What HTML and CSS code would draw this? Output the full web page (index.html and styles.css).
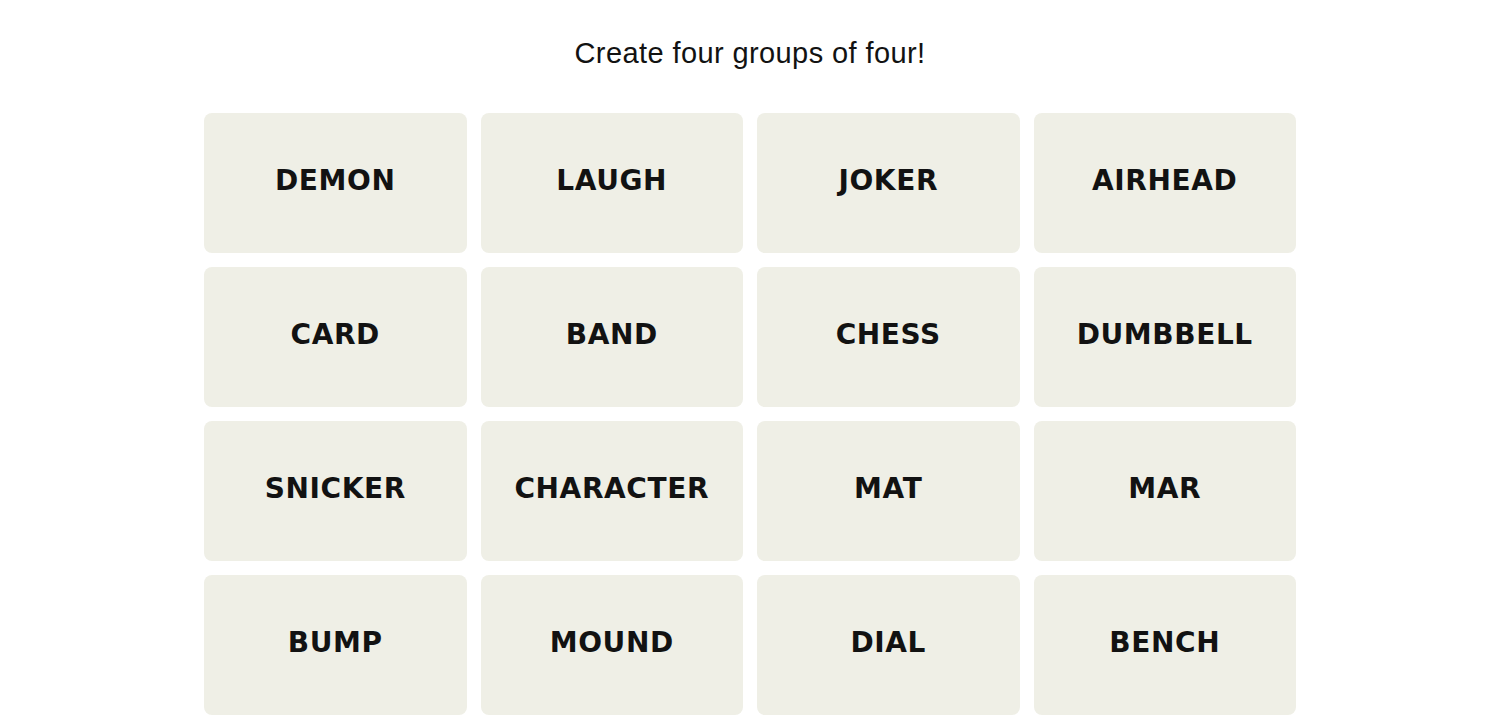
FILE: index.html
```html
<!DOCTYPE html>
<html lang="en">
<head>
  <meta charset="UTF-8" />
  <meta name="viewport" content="width=device-width, initial-scale=1.0" />
  <title>Connections</title>
  <link rel="stylesheet" href="styles.css">
</head>
<body>
  <!-- Game board -->
  <main class="game">
    <h2 class="prompt">Create four groups of four!</h2>
    <div class="board">
      <button class="tile">DEMON</button>
      <button class="tile">LAUGH</button>
      <button class="tile">JOKER</button>
      <button class="tile">AIRHEAD</button>
      <button class="tile">CARD</button>
      <button class="tile">BAND</button>
      <button class="tile">CHESS</button>
      <button class="tile">DUMBBELL</button>
      <button class="tile">SNICKER</button>
      <button class="tile">CHARACTER</button>
      <button class="tile">MAT</button>
      <button class="tile">MAR</button>
      <button class="tile">BUMP</button>
      <button class="tile">MOUND</button>
      <button class="tile">DIAL</button>
      <button class="tile">BENCH</button>
    </div>
  </main>
</body>
</html>
```
FILE: styles.css
```css
body {
  font-family: "Liberation Sans", Arial, sans-serif;
  background-color: #fff;
  color: #121212;
  margin: 0;
}
.game {
  width: 1092px;
  margin: 0 auto;
  padding-top: 34px;
}
.prompt {
  margin: 0 0 41px;
  font-size: 29px;
  font-weight: normal;
  letter-spacing: 0.4px;
  line-height: 38px;
  text-align: center;
}
.board {
  display: grid;
  grid-template-columns: repeat(4, 1fr);
  grid-auto-rows: 140px;
  gap: 14px;
}
.tile {
  background-color: #efefe6;
  border: none;
  border-radius: 8px;
  font-family: "DejaVu Sans", sans-serif;
  font-size: 28px;
  font-weight: bold;
  letter-spacing: 0.6px;
  color: #121212;
  padding: 0 0 6px;
  cursor: pointer;
}
```
